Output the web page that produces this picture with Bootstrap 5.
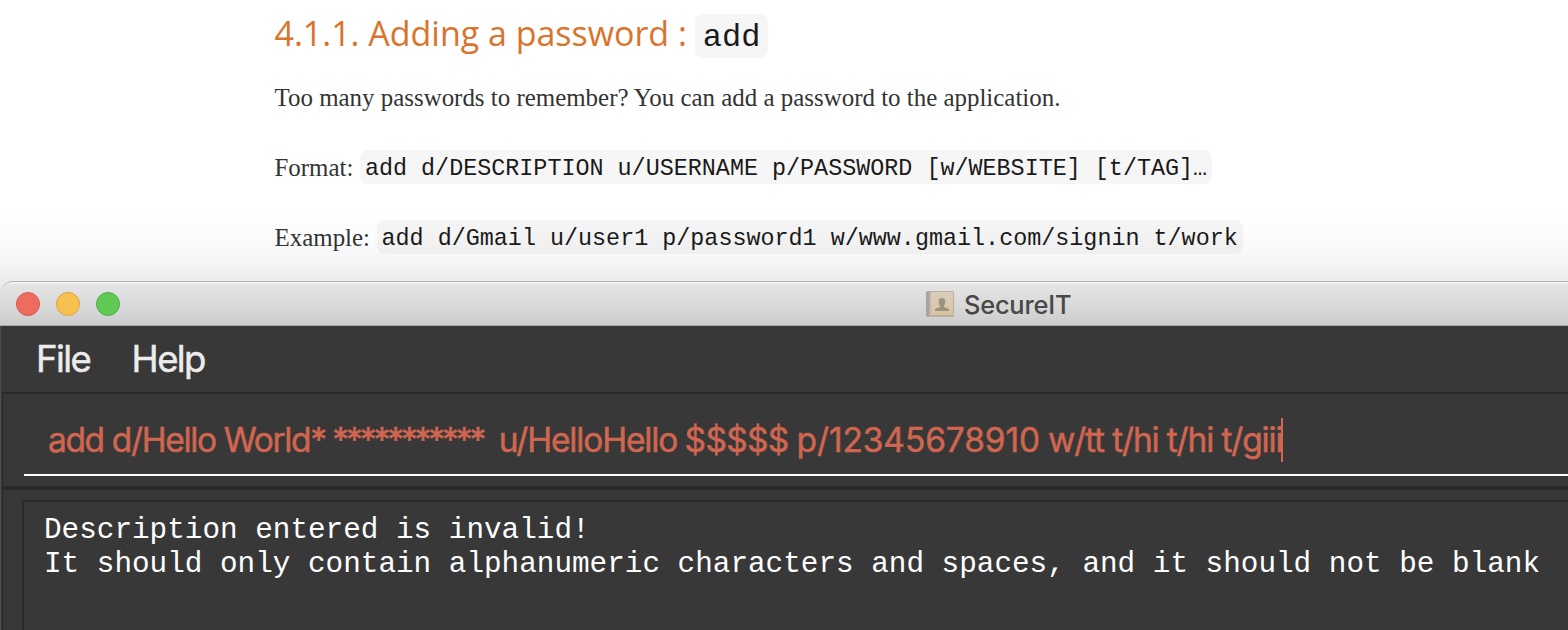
<!DOCTYPE html>
<html lang="en">
<head>
<meta charset="utf-8">
<meta name="viewport" content="width=device-width, initial-scale=1">
<title>SecureIT</title>
<link href="https://cdn.jsdelivr.net/npm/bootstrap@5.3.0/dist/css/bootstrap.min.css" rel="stylesheet">
<style>
  body { height: 630px; background: #fff; }
  .guide { height: 281px; padding: 14px 0 0 274.5px; background: linear-gradient(#fff 205px, #fcfcfc 235px, #f6f6f6 262px, #ececec 281px); font-family: "Liberation Serif", serif; font-size: 24.93px; color: #333; white-space: nowrap; }
  .guide p { height: 34px; line-height: 36px; margin: 0 0 36px; }
  .guide h3 { height: 44px; margin: 0 0 22px; font-family: "Open Sans", sans-serif; font-size: 34px; font-weight: 400; letter-spacing: -.02px; color: #d9742c; line-height: 39px; }
  .guide code { display: block; margin-left: 6.5px; background: rgba(0,0,0,.035); color: #1a1a1a; border-radius: 8px; font-family: "Liberation Mono", monospace; font-size: 23.4px; line-height: 38px; height: 34px; padding: 0 5px; }
  .guide h3 code { margin-left: 8px; font-size: 32px; height: 44px; line-height: 47px; padding: 0 8px; }
  .app-window { background: #383838; border-left: 1px solid #4d4d4d; }
  .title-shell { margin-left: -1px; background: #ececec; }
  .titlebar { height: 45px; border-top: 1px solid #b5b5b5; border-bottom: 1px solid #a8a8a8; border-radius: 13px 0 0 0; background: linear-gradient(#f5f5f5 0 1px, #e5e5e5 2px, #cdcdcd); font-family: Inter, sans-serif; color: #484848; padding-left: 16px; }
  .light { width: 24px; height: 24px; border-radius: 50%; border: 1px solid; }
  .light-close { background: #ee6b60; border-color: #d9584e; }
  .light-minimise { background: #f6c151; border-color: #dba33c; }
  .light-zoom { background: #61c755; border-color: #4cb043; }
  .app-title { margin-left: 806px; padding-top: 2px; font-size: 25.4px; font-weight: 500; letter-spacing: -.2px; }
  .app-title span { padding: 1px 0 0 10px; }
  .app-title svg { opacity: .9; }
  .menus { height: 66px; padding-left: 35px; gap: 41.5px; font-family: Inter, sans-serif; font-size: 36.5px; letter-spacing: -1.6px; color: #ececec; -webkit-text-stroke: .5px #ececec; }
  .command { height: 98px; margin-left: 1px; border: solid #292929; border-width: 2px 0 4px 1px; padding-left: 21px; }
  .command-line { height: 82px; border-bottom: 2px solid #fff; padding: 12px 0 0 24px; font-family: Inter, sans-serif; font-size: 33.5px; color: #d16650; white-space: pre; -webkit-text-stroke: .5px #d16650; }
  .tight { letter-spacing: -1.35px; margin-right: -1.5px; }
  .stars { letter-spacing: -3.05px; margin-right: 2.8px; }
  .user { letter-spacing: -1.16px; margin-right: -.8px; }
  .dollars { letter-spacing: -.7px; margin-right: -.8px; }
  .digits { letter-spacing: -.1px; margin-right: -1.5px; }
  .tags { letter-spacing: -1.15px; }
  .caret { width: 2px; height: 44px; margin-left: -1px; background: #d16650; }
  .result-pane { margin-left: 1px; border-left: 1px solid #292929; padding: 10px 0 0 19px; }
  .result { border: solid #292929; border-width: 2px 0 0 2px; padding: 12px 0 0 20px; font-family: "Liberation Mono", monospace; font-size: 29.34px; line-height: 34px; color: #fff; white-space: pre; }
</style>
</head>
<body class="d-flex flex-column overflow-hidden">
<section class="guide flex-shrink-0">
  <h3 class="d-flex"><span>4.1.1. Adding a password :</span><code>add</code></h3>
  <p class="d-flex">Too many passwords to remember? You can add a password to the application.</p>
  <p class="d-flex"><span>Format:</span><code>add d/DESCRIPTION u/USERNAME p/PASSWORD [w/WEBSITE] [t/TAG]…</code></p>
  <p class="d-flex"><span>Example:</span><code>add d/Gmail u/user1 p/password1 w/www.gmail.com/signin t/work</code></p>
</section>
<main class="app-window flex-grow-1 d-flex flex-column">
  <div class="title-shell">
    <header class="titlebar d-flex align-items-center">
      <div class="d-flex gap-3">
        <span class="light light-close"></span>
        <span class="light light-minimise"></span>
        <span class="light light-zoom"></span>
      </div>
      <div class="app-title d-flex align-items-center">
        <svg width="28" height="26" viewBox="0 0 28 26"><defs><linearGradient id="cover" x2="0" y2="1"><stop stop-color="#d9cdb8"/><stop offset="1" stop-color="#dac49a"/></linearGradient></defs><rect width="28" height="26" rx="1.500" fill="#b9ab92"/><rect x="5" y="1" width="22" height="23" fill="url(#cover)"/><path d="M0 1h3.500v24H0z" fill="#a39d9a"/><path d="M3.500 1H5v24H3.500z" fill="#bdb6ae"/><path d="M9 20v-1.200c0-2 5-1.500 5-3.300v-.8c-2-2.500-1.900-7.700 2-7.700s4 5.200 2 7.700v.8c0 1.800 5 1.300 5 3.300V20z" fill="#96897a"/></svg>
        <span>SecureIT</span>
      </div>
    </header>
  </div>
  <nav class="menus d-flex align-items-center"><span>File</span><span>Help</span></nav>
  <div class="command">
    <div class="command-line d-flex align-items-center"><span class="tight">add d/Hello World* </span><span class="stars">***********  </span><span class="user">u/HelloHello </span><span class="dollars">$$$$$ </span><span class="digits">p/12345678910 </span><span class="tags">w/tt t/hi t/hi t/giii</span><span class="caret"></span></div>
  </div>
  <div class="result-pane flex-grow-1 d-flex flex-column">
    <div class="result flex-grow-1"><div>Description entered is invalid!</div><div>It should only contain alphanumeric characters and spaces, and it should not be blank</div></div>
  </div>
</main>
<script src="https://cdn.jsdelivr.net/npm/bootstrap@5.3.0/dist/js/bootstrap.bundle.min.js"></script>
</body>
</html>
